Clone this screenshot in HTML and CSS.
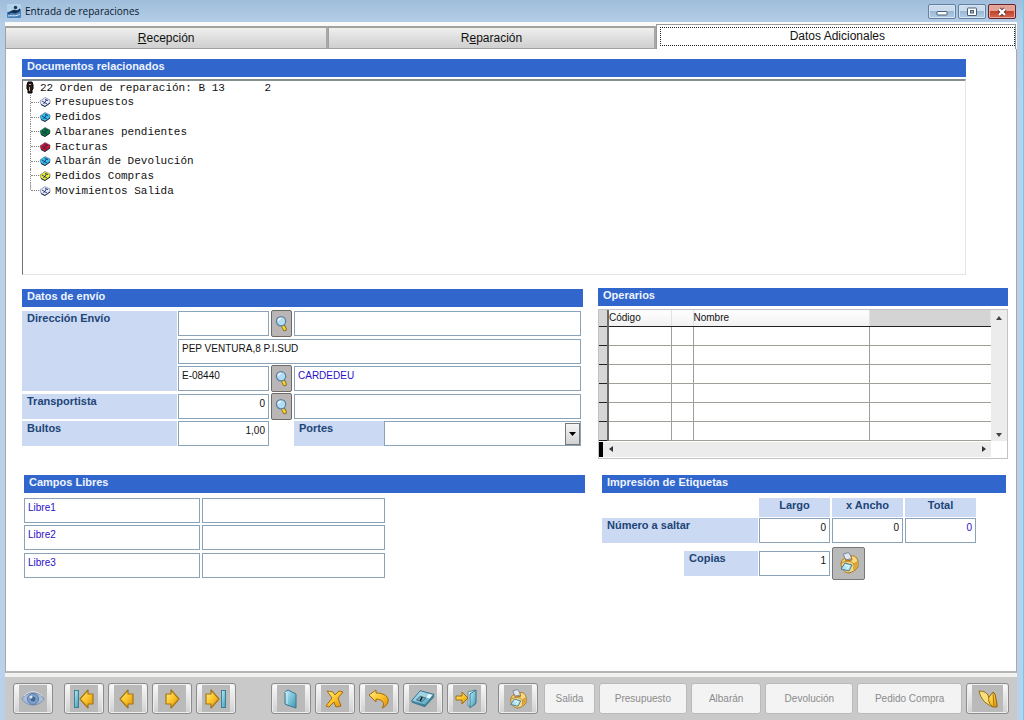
FILE: index.html
```html
<!DOCTYPE html>
<html lang="es">
<head>
<meta charset="utf-8">
<meta name="viewport" content="width=device-width, initial-scale=1">
<title>Entrada de reparaciones</title>
<link rel="stylesheet" href="styles.css">
</head>
<body>
<svg class="defs" aria-hidden="true">
  <defs>
    <linearGradient id="gold" x1="0" y1="0" x2="1" y2="1"><stop offset="0" stop-color="#fff08a"/><stop offset=".5" stop-color="#fcc52a"/><stop offset="1" stop-color="#d98e0c"/></linearGradient>
    <linearGradient id="aqua" x1="0" y1="0" x2="1" y2="1"><stop offset="0" stop-color="#c4ecf5"/><stop offset=".5" stop-color="#7cc3d9"/><stop offset="1" stop-color="#4596b2"/></linearGradient>
    <symbol id="lens" viewBox="0 0 14 18">
      <path d="M8.500 11l2 4" stroke="#8a6a16" stroke-width="4.500" stroke-linecap="round"/>
      <path d="M8.500 11.500l2 3.500" stroke="#f2d433" stroke-width="2.600" stroke-linecap="round"/>
      <circle cx="6.500" cy="6.500" r="5" fill="#b4dcf2" stroke="#5a82a4" stroke-width="1.400"/>
      <path d="M3.500 6a3 3 0 0 1 3-2.500" stroke="#fff" stroke-width="1.500" fill="none"/>
    </symbol>
    <symbol id="doc" viewBox="0 0 12 10">
      <path d="M1 4l5-3.500 5 2.500v3L6 9.500 2 7.500z" fill="currentColor" stroke="#39466e" stroke-opacity=".6" stroke-width=".8"/>
      <path d="M3 4l5 3M7.500 3L4.500 7M6 2.500l3 1" stroke="#1d2c72" stroke-width=".9" fill="none"/>
      <path d="M2 7.500l4 2 5-3.500" stroke="#222b45" fill="none"/>
    </symbol>
    <symbol id="printer" viewBox="0 0 20 22">
      <path d="M6 8L4.500 2l5-1.500 4 6z" fill="#dfe7f3" stroke="#7d8592" stroke-linejoin="round"/>
      <path d="M2 12c0-3 2-5 4-6l1 3 6-1-1-4c4-1 6 2 7 5v6c-3 4-6 5-9 6-4 0-8-4-8-9z" fill="#f8d980" stroke="#a9721a" stroke-linejoin="round"/>
      <path d="M3 11c4-3 9-2 12 1l3-2M15 12v6" stroke="#b98224" fill="none"/>
      <path d="M15 12l3.500-2v5L15 18z" fill="#dca63b"/>
      <path d="M6 11l7 2-3 6-8-2z" fill="#b3e2f0" stroke="#447a90" stroke-linejoin="round"/>
      <path d="M6 13l4 1-2 3" stroke="#eafaff" fill="none"/>
    </symbol>
    <symbol id="arrow-left" viewBox="0 0 16 20">
      <path d="M1 10L9 1v4h5v10H9v4z" fill="url(#gold)" stroke="#a67513" stroke-width="1.200" stroke-linejoin="round"/>
    </symbol>
    <symbol id="arrow-right" viewBox="0 0 16 20">
      <path d="M15 10L7 1v4H2v10h5v4z" fill="url(#gold)" stroke="#a67513" stroke-width="1.200" stroke-linejoin="round"/>
    </symbol>
  </defs>
</svg>

<div class="window">
  <header class="titlebar">
    <svg class="app-icon" viewBox="0 0 14 14" aria-hidden="true"><rect width="14" height="14" rx="1" fill="#4a83bb"/><path d="M0 0h14v5L0 8z" fill="#b4d2ea"/><path d="M1 9c3-1 4-4 7-3 2 1 4 0 5-2v3c-3 2-5 3-7 2-2-1-4 1-5 1z" fill="#152f50"/><circle cx="8.500" cy="3.500" r="1.700" fill="#193657"/><path d="M1 12c4-1 8 1 12-2" stroke="#d8e8f6" fill="none"/></svg>
    <h1 class="title">Entrada de reparaciones</h1>
    <div class="window-buttons">
      <button class="win-btn" type="button" aria-label="Minimizar"><svg viewBox="0 0 12 10"><rect x="1" y="4.500" width="10" height="3.500" rx=".5" fill="#fff" stroke="#485c74"/></svg></button>
      <button class="win-btn" type="button" aria-label="Maximizar"><svg viewBox="0 0 12 10"><rect x="1.500" y="1" width="9" height="7.500" rx=".5" fill="#fff" stroke="#485c74"/><rect x="4.500" y="3.500" width="3" height="2.500" fill="#9db7d2" stroke="#485c74"/></svg></button>
      <button class="win-btn win-close" type="button" aria-label="Cerrar"><svg viewBox="0 0 12 10"><path d="M3 2l6 6M9 2L3 8" stroke="#593232" stroke-width="4"/><path d="M3 2l6 6M9 2L3 8" stroke="#fff" stroke-width="2.400"/></svg></button>
    </div>
  </header>

  <div class="client">
    <nav class="tabs" role="tablist">
      <button class="tab" role="tab" type="button"><span><u>R</u>ecepción</span></button>
      <button class="tab" role="tab" type="button"><span>R<u>e</u>paración</span></button>
      <button class="tab tab-active" role="tab" type="button" aria-selected="true"><span class="focus">Datos Adicionales</span></button>
    </nav>

    <main class="panel">
      <section class="documents">
        <h2 class="bar">Documentos relacionados</h2>
        <div class="tree">
          <div class="tree-root">
            <svg class="root-icon" viewBox="0 0 8 13" aria-hidden="true"><path d="M2 1h4l1 3v4l-1 1v3H2V9L1 8V4z" fill="#241c1c" stroke="#000"/><path d="M3 3h2v1H3zM3 6h1v4H3z" fill="#d79c8c"/></svg>
            <span>22 Orden de reparación: B 13      2</span>
          </div>
          <ul class="tree-list">
            <li><svg class="doc white" aria-hidden="true"><use href="#doc"/></svg>Presupuestos</li>
            <li><svg class="doc cyan" aria-hidden="true"><use href="#doc"/></svg>Pedidos</li>
            <li><svg class="doc green" aria-hidden="true"><use href="#doc"/></svg>Albaranes pendientes</li>
            <li><svg class="doc red" aria-hidden="true"><use href="#doc"/></svg>Facturas</li>
            <li><svg class="doc cyan" aria-hidden="true"><use href="#doc"/></svg>Albarán de Devolución</li>
            <li><svg class="doc yellow" aria-hidden="true"><use href="#doc"/></svg>Pedidos Compras</li>
            <li><svg class="doc white" aria-hidden="true"><use href="#doc"/></svg>Movimientos Salida</li>
          </ul>
        </div>
      </section>

      <div class="columns">
        <section>
          <h2 class="bar">Datos de envío</h2>
          <div class="shipping">
            <label class="label address-label" for="dir">Dirección Envío</label>
            <input class="field" id="dir">
            <button class="lookup" type="button" aria-label="Buscar dirección"><svg><use href="#lens"/></svg></button>
            <input class="field" aria-label="Nombre de envío">
            <input class="field wide" aria-label="Calle" value="PEP VENTURA,8 P.I.SUD">
            <input class="field" aria-label="Código postal" value="E-08440">
            <button class="lookup" type="button" aria-label="Buscar población"><svg><use href="#lens"/></svg></button>
            <input class="field blue" aria-label="Población" value="CARDEDEU">
            <label class="label" for="trans">Transportista</label>
            <input class="field number" id="trans" value="0">
            <button class="lookup" type="button" aria-label="Buscar transportista"><svg><use href="#lens"/></svg></button>
            <input class="field" aria-label="Nombre transportista">
            <label class="label" for="bultos">Bultos</label>
            <input class="field number" id="bultos" value="1,00">
            <div class="portes">
              <label class="label" for="portes">Portes</label>
              <div class="combo">
                <select class="field" id="portes"><option></option></select>
                <span class="combo-arrow" aria-hidden="true"><svg viewBox="0 0 7 4"><path d="M0 0h7L3.500 4z"/></svg></span>
              </div>
            </div>
          </div>
        </section>

        <section class="operators">
          <h2 class="bar">Operarios</h2>
          <div class="grid-box">
            <table class="grid">
              <colgroup><col class="c-mark"><col class="c-code"><col class="c-gap"><col class="c-name"><col></colgroup>
              <thead><tr><th></th><th>Código</th><th></th><th>Nombre</th><th class="empty"></th></tr></thead>
              <tbody>
                <tr><td></td><td></td><td></td><td></td><td></td></tr>
                <tr><td></td><td></td><td></td><td></td><td></td></tr>
                <tr><td></td><td></td><td></td><td></td><td></td></tr>
                <tr><td></td><td></td><td></td><td></td><td></td></tr>
                <tr><td></td><td></td><td></td><td></td><td></td></tr>
                <tr><td></td><td></td><td></td><td></td><td></td></tr>
              </tbody>
            </table>
            <div class="vscroll"><svg viewBox="0 0 6 4"><path d="M0 4h6L3 0z"/></svg><svg viewBox="0 0 6 4"><path d="M0 0h6L3 4z"/></svg></div>
            <div class="hscroll"><svg viewBox="0 0 4 6"><path d="M4 0v6L0 3z"/></svg><svg viewBox="0 0 4 6"><path d="M0 0v6l4-3z"/></svg></div>
          </div>
        </section>
      </div>

      <div class="columns columns-lower">
        <section>
          <h2 class="bar">Campos Libres</h2>
          <div class="free">
            <input class="field blue" aria-label="Nombre libre 1" value="Libre1"><input class="field" aria-label="Valor libre 1">
            <input class="field blue" aria-label="Nombre libre 2" value="Libre2"><input class="field" aria-label="Valor libre 2">
            <input class="field blue" aria-label="Nombre libre 3" value="Libre3"><input class="field" aria-label="Valor libre 3">
          </div>
        </section>

        <section>
          <h2 class="bar">Impresión de Etiquetas</h2>
          <div class="tags">
            <label class="label head first-head" for="largo">Largo</label>
            <label class="label head" for="ancho">x Ancho</label>
            <label class="label head" for="total">Total</label>
            <span class="label jump">Número a saltar</span>
            <input class="field number" id="largo" value="0">
            <input class="field number" id="ancho" value="0">
            <input class="field number blue" id="total" value="0">
          </div>
          <div class="tags copies">
            <label class="label copies-label" for="copias">Copias</label>
            <input class="field number" id="copias" value="1">
            <button class="print" type="button" aria-label="Imprimir etiquetas"><svg><use href="#printer"/></svg></button>
          </div>
        </section>
      </div>
    </main>

    <footer class="toolbar">
      <div class="group">
        <button class="tool" type="button" aria-label="Ver"><svg viewBox="0 0 24 18"><path d="M1 9c4-8 18-8 22 0-5 8-17 8-22 0z" fill="#a9bdd8" stroke="#7b90ae"/><circle cx="12" cy="9" r="5.500" fill="#7d9fcc" stroke="#5f7ca5"/><circle cx="12" cy="9" r="2.500" fill="#46658f"/><circle cx="10" cy="7" r="1.500" fill="#d9e7f6"/><path d="M3 6c5-6 13-6 18 0" stroke="#d5dde8" fill="none"/></svg></button>
      </div>
      <div class="group">
        <button class="tool" type="button" aria-label="Primero"><svg viewBox="0 0 24 20"><rect x="2.500" y="1.500" width="4" height="17" fill="url(#aqua)" stroke="#3b8196"/><use href="#arrow-left" x="7" width="16" height="20"/></svg></button>
        <button class="tool" type="button" aria-label="Anterior"><svg viewBox="0 0 24 20"><use href="#arrow-left" x="3" width="16" height="20"/></svg></button>
        <button class="tool" type="button" aria-label="Siguiente"><svg viewBox="0 0 24 20"><use href="#arrow-right" x="4" width="16" height="20"/></svg></button>
        <button class="tool" type="button" aria-label="Último"><svg viewBox="0 0 24 20"><use href="#arrow-right" x="0" width="16" height="20"/><rect x="17.500" y="1.500" width="4" height="17" fill="url(#aqua)" stroke="#3b8196"/></svg></button>
      </div>
      <div class="group group-edit">
        <button class="tool" type="button" aria-label="Nuevo"><svg viewBox="0 0 24 20"><path d="M6 3l3-2 8 4v14l-9-3-2-1z" fill="url(#aqua)" stroke="#357990" stroke-linejoin="round"/><path d="M6 3l2 1v11" stroke="#ccedf4" fill="none"/></svg></button>
        <button class="tool" type="button" aria-label="Eliminar"><svg viewBox="0 0 24 20"><path d="M4 2l6 1 2 3 4-4 4 1-5 6 3 8-5 1-2-5-5 5-3-1 6-8z" fill="url(#gold)" stroke="#a66b12" stroke-linejoin="round"/></svg></button>
        <button class="tool" type="button" aria-label="Deshacer"><svg viewBox="0 0 24 20"><path d="M2 6l7-5v3c9 0 13 4 12 9-1 3-3 5-6 6 3-4 2-8-6-9v3z" fill="url(#gold)" stroke="#a66b12" stroke-linejoin="round"/></svg></button>
        <button class="tool" type="button" aria-label="Guardar"><svg viewBox="0 0 26 20"><path d="M0.500 12L10 1l15 4-10 13z" fill="url(#aqua)" stroke="#326d85" stroke-linejoin="round"/><path d="M0.500 12l14.500 4 10-11v3L15 19 1 14z" fill="#417e98"/><path d="M11 2.500l9 2.500-3 4-8-3z" fill="#a3d2e0"/><path d="M19 4.500l4 1-3 4-3-1z" fill="#eef8fb"/><path d="M6 11l6 2 4-4-6-2z" fill="#7da9bb" stroke="#33566a" stroke-width=".8"/><path d="M10 12l2-4" stroke="#102634" stroke-width="1.600"/></svg></button>
        <button class="tool" type="button" aria-label="Salir"><svg viewBox="0 0 24 20"><path d="M13 3l7-2v15l-7 1z" fill="#e3f2f7" stroke="#5b8ea1"/><path d="M15 5l6-4v13l-6 5z" fill="url(#aqua)" stroke="#35738b" stroke-linejoin="round"/><path d="M1 7h6V3l6 6-6 6v-4H1z" fill="url(#gold)" stroke="#9e6c12" stroke-linejoin="round"/></svg></button>
      </div>
      <div class="group">
        <button class="tool" type="button" aria-label="Imprimir"><svg><use href="#printer"/></svg></button>
      </div>
      <div class="group group-text">
        <button class="text-btn w-s" type="button" disabled>Salida</button>
        <button class="text-btn w-l" type="button" disabled>Presupuesto</button>
        <button class="text-btn w-m" type="button" disabled>Albarán</button>
        <button class="text-btn w-l" type="button" disabled>Devolución</button>
        <button class="text-btn w-xl" type="button" disabled>Pedido Compra</button>
        <button class="tool" type="button" aria-label="Abrir"><svg viewBox="0 0 24 20"><path d="M3 2c4 0 7 1 9 4l5 12C10 15 5 11 3 2z" fill="#f9df7c" stroke="#96701a" stroke-linejoin="round"/><path d="M17 18c-4-3-5-7-4-10l4-5 2 2 2 10v3z" fill="url(#gold)" stroke="#8d6414" stroke-linejoin="round"/><path d="M17 4l1 13" stroke="#a87a16" fill="none"/></svg></button>
      </div>
    </footer>
  </div>
</div>
</body>
</html>
```
FILE: styles.css
```css
* { box-sizing: border-box; }

body {
  margin: 0;
  font: 10px/14px "Liberation Sans", Arial, sans-serif;
  color: #111;
}

button, input, select { font: inherit; color: inherit; margin: 0; }
h1, h2, ul { margin: 0; padding: 0; }
svg { display: block; fill: none; }
.defs { position: absolute; width: 0; height: 0; }

.window {
  min-height: 100vh;
  display: flex;
  flex-direction: column;
  padding: 0 6px 0 5px;
  background: linear-gradient(#a0bddb, #b5cee8 24px, #b9d1ea 100px);
  border-right: 1px solid #5fd0ee;
}

/* Title bar */
.titlebar {
  display: flex;
  align-items: center;
  gap: 4px;
  height: 22px;
  padding-left: 2px;
}
.app-icon { width: 14px; height: 14px; }
.title { flex: 1; font: 400 10px/14px "Open Sans", "Noto Sans", sans-serif; color: #0b1a2c; }
.window-buttons { display: flex; gap: 2px; align-self: flex-start; padding: 4px 1px 0 0; }
.win-btn {
  display: grid;
  place-items: center;
  width: 28px;
  height: 15px;
  padding: 0;
  border: 1px solid #64809f;
  border-radius: 2px;
  background: linear-gradient(#c9dbed 45%, #9bb7d3 50%, #b4cde6);
  box-shadow: inset 0 0 0 1px #d5e4f2;
}
.win-btn svg { width: 12px; height: 10px; }
.win-close {
  border-color: #67222a;
  background: linear-gradient(#e3a295 45%, #c2422d 50%, #d4694f);
  box-shadow: inset 0 0 0 1px #e4aca0;
}

/* Client area and tabs */
.client { flex: 1; display: flex; flex-direction: column; background: #f2f2f0; }
.tabs {
  display: grid;
  grid-template-columns: 323fr 327fr 360fr;
  height: 27px;
  padding: 2px 1px 0 0;
  background: #fafafa;
}
.tab {
  margin-top: 2px;
  padding: 0;
  border: 1px solid #a0a0a0;
  border-top: 2px solid #a3a19c;
  border-right: 2px solid #a8a8a8;
  background: linear-gradient(#f0f0f0, #dedede 50%, #cfcfcf);
  font-size: 12px;
}
.tab-active {
  margin-top: 0;
  padding: 1px 0 3px 3px;
  border: 1px solid #9a9a96;
  border-bottom: 0;
  background: #fff;
}
.focus { display: grid; place-items: center; height: 19px; border: 1px dotted #222; }

.panel {
  flex: 1;
  padding: 10px 8px 16px 16px;
  background: #fff;
  border: 1px solid #a9a9a9;
  border-top: 0;
  border-bottom: 2px solid #b4b4b2;
}

.bar {
  height: 18px;
  padding-left: 5px;
  background: #3166cc;
  color: #eef4ff;
  font-size: 11px;
  line-height: 15px;
}

/* Document tree */
.documents { margin-right: 42px; }
.tree {
  min-height: 196px;
  margin-top: 2px;
  padding: 0 0 0 3px;
  border: 1px solid #e4e4e4;
  border-top: 2px solid #858f8f;
  border-left: 1px solid #6c7474;
  font: 11px/14px "Liberation Mono", "Courier New", monospace;
}
.tree-root { display: flex; gap: 6px; white-space: pre; }
.root-icon { width: 8px; height: 13px; }
.tree-list {
  display: flex;
  flex-direction: column;
  justify-content: space-between;
  height: 103px;
  margin-left: 4px;
  list-style: none;
}
.tree-list li { display: flex; align-items: center; height: 15px; border-left: 1px dotted #888; }
.tree-list li:last-child { border-image: linear-gradient(#aaa 50%, transparent 50%) 1; }
.tree-list li::before { content: ""; width: 8px; border-top: 1px dotted #888; }
.doc { width: 12px; height: 10px; margin-right: 4px; }
.white { color: #e8ecfa; }
.cyan { color: #35c1e8; }
.green { color: #087a2e; }
.red { color: #d01226; }
.yellow { color: #eeea2c; }

/* Form pieces */
.columns {
  display: grid;
  grid-template-columns: 561fr 410fr;
  gap: 15px;
  margin-top: 14px;
}
.columns-lower {
  grid-template-columns: 561fr 404fr;
  gap: 17px;
  margin: 16px 2px 0;
}
.label {
  padding-left: 5px;
  background: #cbd9f2;
  color: #1c4577;
  font-weight: 700;
  font-size: 11px;
}
.field {
  width: 100%;
  min-width: 0;
  height: 25px;
  padding: 0 3px 6px;
  border: 1px solid #8aa3b8;
  border-radius: 0;
  background: #fff;
}
.number { text-align: right; }
.blue { color: #2a10c8; }

.shipping {
  display: grid;
  grid-template-columns: 154px 91px 21px 1fr;
  grid-auto-rows: 25px;
  column-gap: 2px;
  align-content: space-between;
  height: 135px;
  margin: 4px 2px 0 0;
}
.shipping > .label { margin-right: -1px; }
.address-label { grid-row: span 3; }
.wide { grid-column: 2 / -1; }
.lookup {
  display: grid;
  place-items: center;
  height: 27px;
  margin-top: -1px;
  padding: 0;
  border: 1px solid #6e6a68;
  border-radius: 2px;
  background: #b9b6b5;
}
.lookup svg { width: 13px; height: 17px; }
.portes { grid-column: 4; display: grid; grid-template-columns: 90px 1fr; }
.combo { position: relative; }
.combo select { appearance: none; }
.combo-arrow {
  position: absolute;
  top: 2px;
  right: 1px;
  bottom: 1px;
  display: grid;
  place-items: center;
  width: 15px;
  border: 1px solid #777;
  background: linear-gradient(#f5f5f5, #d2d2d2);
  pointer-events: none;
}
.combo-arrow svg { width: 7px; height: 4px; fill: #000; }

/* Operators grid */
.operators { margin-top: -1px; }
.grid-box {
  display: grid;
  grid-template-columns: 1fr 16px;
  margin-top: 3px;
  border: 1px solid #c3c3c3;
}
.grid { width: 100%; table-layout: fixed; border-collapse: collapse; }
.c-mark { width: 9px; }
.c-code { width: 63px; }
.c-gap { width: 22px; }
.c-name { width: 176px; }
.grid th {
  height: 16px;
  padding: 0;
  border-right: 1px solid #e2e2e2;
  border-bottom: 1px solid #222;
  background: linear-gradient(#fff, #f1f1f1);
  font-weight: 400;
  text-align: left;
}
.grid .empty { background: #d4d4d4; }
.grid td { height: 19px; padding: 0; border: 1px solid #a09f98; }
.grid td:last-child { border-right: 0; }
.grid td:first-child, .grid th:first-child {
  border: 1px solid #222;
  border-left: 0;
  border-right: 2px solid #6a6a6a;
  background: #d6d6d6;
}
.grid tr:first-child th { border-top: 0; }
.vscroll, .hscroll { display: flex; align-items: center; justify-content: space-between; background: #ececec; }
.vscroll { flex-direction: column; padding: 6px 0 4px; }
.vscroll svg { width: 6px; height: 4px; fill: #444; }
.hscroll { height: 15px; margin: 1px 0; padding: 0 5px 0 6px; border-left: 4px solid #000; }
.hscroll svg { width: 4px; height: 6px; fill: #333; }

/* Free fields */
.free {
  display: grid;
  grid-template-columns: 176fr 183fr;
  grid-auto-rows: 25px;
  column-gap: 2px;
  align-content: space-between;
  width: 64.4%;
  height: 80px;
  margin-top: 5px;
}

/* Label printing */
.tags {
  display: grid;
  grid-template-columns: 155px repeat(3, 71px);
  grid-template-rows: 19px 25px;
  gap: 1px 2px;
  margin-top: 5px;
}
.head { text-align: center; padding-left: 0; }
.first-head { grid-column: 2; }
.jump, .copies-label { margin-right: -1px; }
.copies { grid-template-rows: 33px; align-items: center; margin-top: 4px; }
.copies-label { height: 25px; margin-left: 82px; }
.print {
  display: grid;
  place-items: center;
  width: 33px;
  height: 33px;
  padding: 0;
  border: 1px solid #777;
  border-radius: 2px;
  background: #b9b9b9;
}
.print svg { width: 20px; height: 22px; }

/* Bottom toolbar */
.toolbar {
  display: flex;
  gap: 11px;
  margin-top: 4px;
  padding: 6px 8px;
  background: #c9c9c9;
}
.group { display: flex; gap: 4px; }
.group-edit { margin-left: 24px; }
.group-text { flex: 1; margin-left: -5px; }
.tool {
  display: grid;
  place-items: center;
  width: 40px;
  height: 31px;
  padding: 0;
  border: 1px solid #8c8c8c;
  border-radius: 3px;
  background: linear-gradient(90deg, transparent 5px, #bababa 5px, #bababa calc(100% - 5px), transparent calc(100% - 5px)), linear-gradient(#fafafa, #d0d0d0);
  box-shadow: inset 0 0 0 1px #ededed;
}
.tool svg { width: 24px; height: 20px; }
.text-btn {
  height: 31px;
  padding: 0;
  border: 1px solid #b9b9b9;
  border-radius: 3px;
  background: #f3f3f3;
  color: #8b8b8b;
  font-size: 10px;
}
.w-s { flex: 50; }
.w-m { flex: 70; }
.w-l { flex: 88; }
.w-xl { flex: 105; }
.group-text .tool { width: 43px; }
```
